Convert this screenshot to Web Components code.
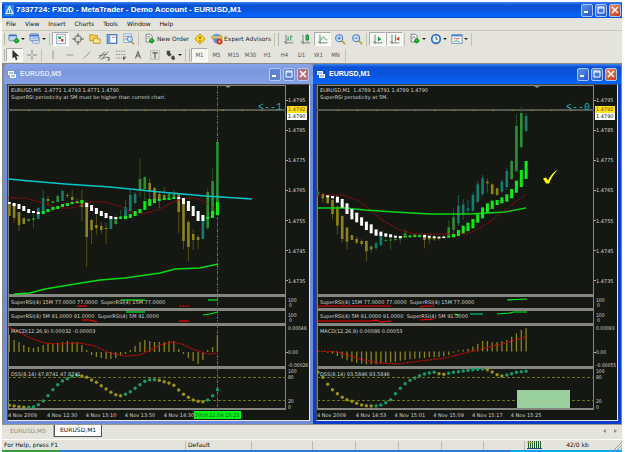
<!DOCTYPE html>
<html lang="en">
<head>
<meta charset="utf-8">
<title>MetaTrader</title>
<style>
html,body{margin:0;height:100%;background:#fff}
body{font:6px/8px "DejaVu Sans",sans-serif;color:#111}
</style>
</head>
<body>
<trader-app></trader-app>
<script>
const reset = `*{box-sizing:border-box}button{font:inherit;color:inherit;background:none;border:0;padding:0;margin:0;display:flex;align-items:center;justify-content:center}svg{display:block}`;

class BaseElement extends HTMLElement {
  constructor() { super(); this.attachShadow({ mode: 'open' }); }
  connectedCallback() { this.shadowRoot.innerHTML = `<style>${reset}${this.css()}</style>${this.html()}`; }
  css() { return ''; }
  html() { return '<slot></slot>'; }
}

/* ---------- icons, 14x14 ---------- */
const plus = (x, y) => `<path d="M${x-3} ${y}h6M${x} ${y-3}v6" stroke="#0b8a1a" stroke-width="3"/><path d="M${x-2} ${y}h4M${x} ${y-2}v4" stroke="#2fcf3a"/>`;
const page = `<path d="M2.500 1.500h5l2 2v7h-7z" fill="#f4f4f4" stroke="#777"/>`;
const lens = `<circle cx="6" cy="6" r="4" fill="#cfe4fb" stroke="#4a7fc4" stroke-width="1.300"/><path d="M9 9l4 4" stroke="#c79a35" stroke-width="2"/>`;
const axes = `<path d="M3.500 2v9.500H12M1 10.500h3M3.500 11v2" stroke="#66777a"/>`;
const ICONS = {
  newchart: `<rect x="1" y="2" width="9" height="7" rx="1" fill="#bcd5f3" stroke="#5b87bb"/><path d="M1 3h9" stroke="#4076ba" stroke-width="1.500"/>${plus(10,9)}`,
  profiles: `<rect x="4" y="4" width="8" height="8" rx="1" fill="#e7eef8" stroke="#7e9cc4"/><rect x="1" y="1" width="10" height="8" rx="1" fill="#c3daf5" stroke="#5b87bb"/><path d="M1 3h10" stroke="#4076ba" stroke-width="2"/><path d="M3 6h6" stroke="#7ba3d1"/>`,
  market: `<rect x="2" y="1.500" width="10" height="11" fill="#fff" stroke="#7a9cc8"/><path d="M4 4h3v3H4z" fill="#20a040"/><path d="M7 7h3v3H7z" fill="#d03a2a"/><path d="M8 4h2M4 9h2" stroke="#89a"/>`,
  cross: `<circle cx="7" cy="7" r="4" stroke="#555"/><path d="M7 0v5M7 9v5M0 7h5M9 7h5" stroke="#555"/>`,
  folder: `<path d="M1 2h4l1 1h4v6H1z" fill="#f7d558" stroke="#b98c1a"/><path d="M5 6h4l1 1h3v5H5z" fill="#fbe88a" stroke="#b98c1a"/>`,
  panel: `<rect x="1.500" y="2" width="11" height="10" fill="#fff" stroke="#3a6fc0" stroke-width="1.400"/><path d="M2 3h3v9H2z" fill="#6ea2e6"/><path d="M7 5h4" stroke="#c77"/>`,
  tester: `<rect x="1" y="1" width="9" height="10" fill="#e5effa" stroke="#8aa8cd"/><path d="M2 4h7M2 7h4" stroke="#88a"/><circle cx="8" cy="7" r="3" fill="#cfe4fb" stroke="#4a7fc4"/><path d="M10 10l3 3" stroke="#b98c1a" stroke-width="1.700"/>`,
  order: `${page}<path d="M4 4h3M4 6h4" stroke="#999"/>${plus(9,9)}`,
  editor: `<path d="M7 1l6 6-6 6-6-6z" fill="#ffd51e" stroke="#c48a08"/><path d="M7 4v3M7 8.500v1.500" stroke="#7a4a00" stroke-width="1.500"/>`,
  expert: `<ellipse cx="7" cy="5" rx="6" ry="3" fill="#f1c84a" stroke="#a98518"/><path d="M3 4c0-4 7-4 8 0z" fill="#5f9ee2"/><path d="M3 6v4c2 3 6 3 7 0V6z" fill="#5b95d8"/><circle cx="10" cy="10" r="3.500" fill="#e0361e"/><path d="M9 9h2v2H9z" fill="#fff"/>`,
  bars: `${axes}<path d="M6 4v5M5 8h1M9 3v6M9 4h2" stroke="#208a50"/>`,
  candles: `${axes}<path d="M8.500 1v9" stroke="#178a30"/><rect x="7" y="3" width="3" height="5" fill="#2bc345" stroke="#178a30"/>`,
  line: `${axes}<path d="M4 9c2-5 4-5 5-3s2 2 3 2" stroke="#2c9a50"/>`,
  zoomin: `${lens}<path d="M4 6h4M6 4v4" stroke="#2368b5"/>`,
  zoomout: `${lens}<path d="M4 6h4" stroke="#2368b5"/>`,
  scroll: `${axes}<path d="M7 4l4 3-4 3z" fill="#1c9e35"/>`,
  shift: `${axes}<path d="M7.500 2v8" stroke="#2f6fba"/><path d="M12 4L8 7l4 2z" fill="#d8431d"/>`,
  indicators: `${page}<path d="M4 7c1-4 2-4 3-1" stroke="#77a"/>${plus(9,9)}`,
  clock: `<circle cx="7" cy="7" r="5" fill="#eaf3ff" stroke="#2e6fc9" stroke-width="2"/><path d="M7 4v3l2 1" stroke="#345"/>`,
  template: `<rect x="1" y="2" width="12" height="10" fill="#fff" stroke="#5b87bb"/><path d="M1 3h12" stroke="#4b88d1" stroke-width="2"/><path d="M3 7l2-1 2 1 3-1" stroke="#c43"/><path d="M3 10l3-1 4 1" stroke="#2a5"/>`,
  cursor: `<path d="M4 1v10l2.500-2 1.500 4 2-1-1.500-3.500H12z" fill="#333"/>`,
  crosshair: `<path d="M7 1v5M7 8v5M1 7h5M8 7h5" stroke="#777"/>`,
  vline: `<path d="M7 2v10" stroke="#888"/>`,
  hline: `<path d="M3 7h8" stroke="#888"/>`,
  trend: `<path d="M3 11l8-8" stroke="#888"/>`,
  channel: `<path d="M1 11l7-8M5 11l7-8M1 8l9-2M3 12l8-3" stroke="#666"/><path d="M11 10h2v3h-2" stroke="#444"/>`,
  fib: `<path d="M1 2.500h11M1 6.500h11M1 10.500h8" stroke="#666" stroke-dasharray="1 1"/><path d="M10 9v4M10 9.500h3M10 11h2" stroke="#444"/>`,
  label: `<path d="M4 11l3-8 3 8M5 8h4" stroke="#666" stroke-width="1.300"/>`,
  textbox: `<rect x="2" y="2" width="10" height="10" stroke="#888" stroke-dasharray="1 1"/><path d="M4 4.500h6M7 4v7" stroke="#555" stroke-width="1.300"/>`,
  arrows: `<path d="M2 2h4v3l2 1-3 3-3-3z" fill="#444"/><path d="M8 8h3v2l1 1-2 2-3-2z" fill="#444"/>`
};
const icon = n => `<svg width="12" height="12" viewBox="0 0 14 14" fill="none" aria-hidden="true">${ICONS[n]}</svg>`;

/* ---------- chrome ---------- */
customElements.define('window-buttons', class extends BaseElement {
  css() { return `:host{display:flex;gap:2px}
    button{width:12px;height:13px;border-radius:2px;border:1px solid #a9c4f5;background:linear-gradient(135deg,#5d92f0,#2458c8)}
    .x{background:linear-gradient(135deg,#ec8a62,#c43a12)}
    :host([dim]) button{background:#5f84cf;border-color:#b7c8f0}:host([dim]) .x{background:#b0707c}`; }
  html() { return `<button aria-label="Minimize"><svg width="8" height="8"><path d="M1 6h4" stroke="#fff" stroke-width="2"/></svg></button>
    <button aria-label="Restore"><svg width="8" height="8"><path d="M1 1h6v6H1zM1 2h6" fill="none" stroke="#fff"/></svg></button>
    <button class="x" aria-label="Close"><svg width="8" height="8"><path d="M1 1l6 6M7 1L1 7" stroke="#fff" stroke-width="1.500"/></svg></button>`; }
});

customElements.define('app-title', class extends BaseElement {
  css() { return `:host{display:flex;align-items:center;height:16px;padding:0 1px 0 3px;gap:2px;background:linear-gradient(#3a86f2,#0a50d4 20%,#0a56e0 55%,#0567ff 90%,#0549c4);color:#fff;font:bold 8px/10px "Liberation Sans",Arial,sans-serif}
    h1{font:inherit;margin:0;flex:1;white-space:nowrap}`; }
  html() { return `<svg width="9" height="11" viewBox="0 0 9 11"><rect width="9" height="11" fill="#2c8ae0"/><path d="M4.500 1.500L8 8.500H1z" fill="none" stroke="#e9f5ff" stroke-width="1.200"/><path d="M1 8.500h7M4.500 4v4" stroke="#fff"/></svg>
    <h1><slot></slot></h1><window-buttons></window-buttons>`; }
});

customElements.define('menu-bar', class extends BaseElement {
  css() { return `:host{display:block;height:13px;border-bottom:1px solid #c9c9b6}nav{display:flex;gap:9px;padding:2px 4px}`; }
  html() { return `<nav>${['File','View','Insert','Charts','Tools','Window','Help'].map(t => `<button>${t}</button>`).join('')}</nav>`; }
});

customElements.define('tool-button', class extends BaseElement {
  css() { return `:host{display:block}button{height:14px;min-width:17px;gap:1px;white-space:nowrap;color:#222}
    :host([menu]) button{width:21px}
    :host([pressed]) button{background:#f7f7f2;border:1px solid;border-color:#aaa #fff #fff #aaa}
    :host([period]) button{color:#555;width:17px;font-family:"DejaVu Sans Condensed","DejaVu Sans",sans-serif}
    .car{border:solid transparent;border-width:2px 2px 0;border-top-color:#222}
    :host([text]) button{padding:0 2px 0 3px}`; }
  html() { const n = this.getAttribute('icon');
    return `<button aria-label="${this.textContent || n}">${n ? icon(n) : ''}<slot></slot>${this.hasAttribute('menu') ? '<i class="car"></i>' : ''}</button>`; }
});

customElements.define('tool-bar', class extends BaseElement {
  css() { return `:host{display:flex;align-items:center;height:16px;padding-left:4px;background:linear-gradient(#b5b5a5,#b5b5a5) 2px 2px/1px 12px no-repeat}`; }
});
customElements.define('tool-sep', class extends BaseElement {
  css() { return `:host{width:4px;height:13px;background:linear-gradient(#c2c2ae,#c2c2ae) 1px 0/1px 100% no-repeat}
    :host([grip]){width:7px;background:linear-gradient(#c2c2ae,#c2c2ae) 1px 0/1px 100% no-repeat,linear-gradient(#b5b5a5,#b5b5a5) 5px 0/1px 100% no-repeat}`; }
});

/* ---------- chart data: [body top, body bottom, wick top, wick bottom, colour] ---------- */
const STEP = 4.84;
const M5 = {
  x0: 9.3, left: 8, width: 278, crosshair: 217.5, marker: 228,
  candles: [[203,216],[204,218,203,223],[212,225,212,231],[218,224],[219,221,218,222,'g'],[218,220,213,228,'g'],[208,219,207,219,'t'],[198,211,190,213,'t'],[199,201,196,206],[201,203,201,203,'g'],[196,202,194,202,'g'],[191,201,190,201,'t'],[195,196,193,198],[197,200,190,203],[201,203,198,204],[200,207,190,221],[202,237,202,267],[220,230,219,244],[225,228,214,235],[226,230,222,234],[228,229,223,244],[219,229,217,229,'t'],[217,224,215,225,'g'],[216,219,210,219,'g'],[207,218,200,218,'t'],[195,211,190,213,'t'],[194,203,192,204,'t'],[179,190,158,197,'g'],[177,189,176,200,'g'],[183,192,178,199],[188,199,187,201],[194,201,191,208],[195,198,187,199],[194,198,193,198,'g'],[194,197,190,198,'g'],[193,212,193,233],[201,241,200,249],[222,247,220,261],[234,240,229,250],[237,240,235,249],[219,239,218,239,'t'],[192,228,188,230,'g'],[181,217,168,217,'g'],[142,204,142,204,'g']],
  blocks: [[202,204],[203,206],[204,209],[206,211],[209,213],[211,213],[212,214],[211,214,1],[209,212,1],[207,210,1],[206,209,1],[204,207,1],[203,206,1],[202,204,1],[202,203,1],[200,203,1],[203,207],[205,211],[208,214],[211,216],[213,218],[216,219],[217,219],[217,219,1],[216,219,1],[214,218,1],[211,216,1],[209,213,1],[201,210,1],[199,206,1],[199,203,1],[199,201,1],[198,200,1],[198,200,1],[197,199,1],[197,199],[198,204],[201,211],[206,216],[211,221],[215,221],[217,219,1],[211,218,1],[202,215,1]],
  overlays: [['#00c8c8','8,179 30,181 65,184 110,187 160,192 205,196 252,199',1.5],['#a80808','8,198 25,198 40,202 58,208 72,208 90,202 105,202 120,206 133,213 148,213 160,209 175,201 187,198 195,198 205,202 213,208 217,211',1,'2 1'],['#08dc14','14,294 30,293 45,289 75,284 100,280 125,278 160,273 175,269 200,268 218,264',1.3]],
  rsi15: [['#f00','77,306 87,306'],['#0e2','121,300 145,300'],['#f00','179,306 189,306','2 1'],['#0e2','208,300 218,300']],
  rsi5: [['#0e2','126,312 145,312'],['#f00','82,320 90,320 97,322'],['#f00','179,321 189,321'],['#0e2','203,315 210,314 218,312']],
  zero: 352, macd: [335,340,342,345,347,348,347,345,343,344,343,342,341,342,342,345,350,355,357,358,359,359,358,356,354,350,346,342,340,341,342,342,342,341,341,349,354,358,361,364,360,350,347,335],
  signal: '8,327 18,331 30,338 45,343 60,344 80,343 95,346 110,353 125,356 140,355 150,350 160,345 172,342 182,344 195,350 208,354 217,353',
  dss: [346,348,350,352,352,350,344,333,317,299,284,273,266,258,256,258,262,270,277,287,297,307,314,317,313,305,295,284,274,269,269,271,275,279,286,300,313,322,330,334,335,330,317,299],
  head: ['EURUSD,M5&nbsp; 1.4771 1.4793 1.4771 1.4790','SuperRSI periodicity at 5M must be higher than current chart.'],
  macdText: 'MACD(12,26,9) 0.00032 -0.00003', dssText: 'DSS(8,14) 47.8741 47.8741', macdAxis: ['0.00048','0.00','-0.00026'],
  arrow: '&lt;--1', times: ['4 Nov 2009','4 Nov 12:30','4 Nov 13:10','4 Nov 13:50','4 Nov 14:30'], cursorTime: '2009.11.04 15:25'
};
const c = (a, b, wa, wb, k) => [180 + a/3, 180 + b/3, 180 + (wa ?? a)/3, 180 + (wb ?? b)/3, k];
const blk = (a, b, g) => [180 + a/3, 180 + b/3, g];
const M1 = {
  x0: 318, left: 317, width: 277, marker: 537,
  candles: [c(35,45,30,50,'t'),c(42,55,38,68),c(50,70),c(60,102,58,118),c(80,137,75,163),c(108,177,105,187),c(143,185,140,208),c(165,180),c(177,188,170,192),c(183,192,178,198),c(183,214,180,243),c(200,208,195,218),c(190,204,185,210,'t'),c(168,195,166,198,'t'),c(180,183,172,185,'g'),c(178,182,170,210,'g'),c(176,180,172,184,'g'),c(172,178,168,190,'g'),c(160,172,147,174,'g'),c(167,170,163,174,'g'),c(163,170,162,173,'g'),c(165,170,160,172,'g'),c(165,180,163,205),c(170,178,168,192),c(170,178,166,183),c(172,176,168,182),c(168,172,165,176,'g'),c(142,170,122,172,'g'),c(112,150,85,165,'g'),c(77,130,45,138,'t'),c(73,105,58,120,'t'),c(85,92,60,103,'t'),c(45,92,38,95,'t'),c(13,65,3,68,'t'),c(-5,42,-15,48,'t'),c(5,10,-5,38),c(13,42,10,44),c(25,45,22,48),c(5,35,0,38,'t'),[171,187,168,190,'t'],[161,179,160,180,'g'],[126,171,114,173,'g'],[113,147,107,149,'g'],[116,131,113,132,'t']],
  blocks: [,,blk(46,52),blk(48,55),blk(50,68),blk(57,83),blk(70,102),blk(87,118),blk(98,127),blk(112,137),blk(125,150),blk(133,160),blk(148,167),blk(155,168),blk(160,170),blk(163,172),blk(167,173),blk(168,174),blk(168,172,1),blk(167,172,1),blk(166,171,1),blk(166,171,1),blk(165,172),blk(167,173),blk(169,174),blk(170,175),blk(170,174),blk(168,173,1),blk(162,172,1),blk(150,168,1),blk(137,160,1),blk(128,153,1),blk(117,145,1),blk(103,128,1),blk(82,115,1),blk(70,98,1),blk(62,87,1),blk(60,75,1),blk(52,70,1),blk(43,65,1),blk(27,55,1),blk(2,38,1),[170,187,1],[161,179,1]],
  overlays: [['#a80808','318,195 343,195 357,200 368,208 382,220 400,230 415,234 440,234 465,234 475,231 490,222 505,210 520,199 526,194',1,'2 1'],['#08d814','317,208 345,208 365,210 395,212 430,214 470,214 505,212 526,208',1.3]],
  rsi15: [['#f00','318,306 391,306'],['#f00','420,307 426,306 434,306'],['#0e2','507,300 527,299']],
  rsi5: [['#f00','318,321 372,321 376,320 380,322 391,321'],['#f00','420,320 434,319'],['#0e2','454,314 459,315'],['#0b8','470,314 483,314'],['#0e2','497,314 510,313 514,312 527,312']],
  zero: 351.5, macd: [184,186,188,191,198,205,211,215,218,221,223,223,222,220,218,217,215,212,210,208,206,205,204,202,202,201,199,195,188,181,179,176,170,161,153,153,157,156,153,150,140,130,120,115].map(v => 290 + v/3),
  signal: '318,351 338,352 360,359 378,363 398,364 420,361 445,358 465,353 485,348 505,343 526,337',
  dss: [247,262,283,299,311,322,329,334,340,345,347,348,348,345,338,329,311,295,281,271,264,257,252,249,247,251,253,250,247,245,243,241,239,238,237,239,246,254,258,255,251,247,245,244],
  head: ['EURUSD,M1&nbsp; 1.4789 1.4791 1.4789 1.4790','SuperRSI periodicity at 5M.'],
  macdText: 'MACD(12,26,9) 0.00086 0.00053', dssText: 'DSS(8,14) 93.5846 93.5846', macdAxis: ['0.00093','0.00','-0.00055'],
  arrow: '&lt;--0', times: ['4 Nov 2009','4 Nov 14:53','4 Nov 15:01','4 Nov 15:09','4 Nov 15:17','4 Nov 15:25'], check: true
};
const CHARTS = { M5, M1 };
const COL = { t: '#0f7f72', g: '#2c8f35', o: '#8c8414' };
const WICK = { t: '#155c50', g: '#2a4f1e', o: '#55500f' };
const line = (col, pts, w = 1.4, dash = '') => `<polyline points="${pts}" fill="none" stroke="${col}" stroke-width="${w}" stroke-dasharray="${dash}"/>`;
const xs = (d, i) => +(d.x0 + STEP * i).toFixed(1);

const draw = {
  main(d) {
    const r = d.left + d.width;
    let s = `<path d="M${d.left} 110H${r}" stroke="#555850" stroke-width="2"/><path d="M${d.left+20} 110.500H${r-20}" stroke="#8c8414" stroke-dasharray="2 17.400"/>
      <path d="M${d.marker-3} 86h6l-3 2z" fill="#888"/>`;
    d.candles.forEach(([a, b, wa = a, wb = b, k = 'o'], i) => { const x = xs(d, i);
      s += `<path d="M${x} ${wa}V${wb}" stroke="${WICK[k]}"/><path d="M${x} ${a}V${b}" stroke="${COL[k]}" stroke-width="2.600"/>`; });
    d.overlays.forEach(o => s += line(...o));
    d.blocks.forEach(([a, b, g], i) => s += `<path d="M${xs(d, i)} ${a}V${b}" stroke="${g ? '#06ee12' : '#fff'}" stroke-width="3"/>`);
    if (d.check) s += `<path d="M543 178.500l3-1 2 3q3-7 10-11q-6 6-9 14h-3z" fill="#ff0"/>`;
    return s;
  },
  rsi15: d => d.rsi15.map(([k, p, h]) => line(k, p, 1.2, h)).join(''),
  rsi5: d => d.rsi5.map(([k, p]) => line(k, p, 1.2)).join(''),
  macd: d => d.macd.map((v, i) => `<path d="M${xs(d, i)} ${d.zero}V${v}" stroke="#8a8413" stroke-width="1.300"/>`).join('') + line('#d00808', d.signal, 1.2, '2 1'),
  dss(d) {
    const r = d.left + d.width;
    let s = `<path d="M${d.left} 377.500H${r}M${d.left} 400.500H${r}" stroke="#6f7416" stroke-dasharray="3 2"/>`;
    d.dss.forEach((v, i) => s += `<circle cx="${xs(d, i)}" cy="${(290 + v/3).toFixed(1)}" r="1.700" fill="${v <= (d.dss[i-1] ?? 0) ? '#1b9a68' : '#9a9218'}"/>`);
    if (d.check) s += `<rect x="517" y="390" width="53" height="18" fill="#9bd0a0"/><path d="M517 400.500h53" stroke="#a5c882" stroke-dasharray="3 2"/>`;
    return s;
  }
};

customElements.define('chart-plot', class extends BaseElement {
  css() { return `:host{display:block;position:relative;overflow:hidden;min-height:0;padding:3px 0 0 3px;white-space:nowrap;box-shadow:inset 1px 1px #85857f,inset -1px -2px #85857f}
    :host([pane=main]){padding-top:2px}
    svg{position:absolute;inset:0;width:100%;height:100%}div{position:relative}`; }
  html() {
    const d = CHARTS[this.getAttribute('chart')], n = this.getAttribute('pane');
    const [y, h] = { main:[85,211], rsi15:[296,14], rsi5:[310,15], macd:[325,43], dss:[368,42] }[n];
    const cross = d.crosshair ? `<path d="M${d.crosshair} ${y}v${h}" stroke="#1f9a4a" stroke-dasharray="3 1 1 1"/>` : '';
    return `<svg viewBox="${d.left} ${y} ${d.width} ${h}" preserveAspectRatio="none" aria-hidden="true">${cross}${draw[n](d)}</svg><div><slot></slot></div>`;
  }
});

customElements.define('chart-window', class extends BaseElement {
  css() { return `:host{display:flex;flex-direction:column;min-width:0;min-height:0;padding:0 3px 3px;background:#0b3ccc;border-radius:4px 4px 0 0}
    :host([dim]){background:#6f8bdc}
    header{display:flex;align-items:center;height:20px;flex:none;margin:0 -3px;padding:0 4px 0 4px;gap:3px;border-radius:4px 4px 0 0;background:linear-gradient(#3a86f2,#0a50d4 15%,#0a56e0 60%,#0567ff);color:#fff;font:bold 7px/10px "Liberation Sans",Arial,sans-serif}
    :host([dim]) header{background:linear-gradient(#8aa4e8,#7c96de 40%,#86a2e6);color:#dfe6f8}
    h2{font:inherit;margin:0;flex:1}
    .client{flex:1;min-height:0;background:#151812;border:1px solid;border-color:#444 #e8e8e8 #e8e8e8 #444;display:grid;grid-template-columns:minmax(0,1fr) 23px;grid-template-rows:211fr 14fr 15fr 43fr 42fr 10fr;color:#d4d4d0;font-size:5px;line-height:6px}
    .ax{display:flex;flex-direction:column;min-height:0;padding-left:2px;justify-content:space-between;position:relative;white-space:nowrap;font-family:"DejaVu Sans Condensed","DejaVu Sans",sans-serif}
    .price{padding:0;font-family:"DejaVu Sans",sans-serif}.price span{flex:1;display:flex;align-items:center}.price span::before,.zero::before{content:"";width:2px;height:1px;background:#aaa}
    .zero{display:flex;align-items:center;margin:11px 0 0 -2px}
    .two{justify-content:center;line-height:5px}.two span+span{padding-left:1px}
    .dss{display:grid;grid-template-rows:6px 1fr 6px 6px}
    .tag{position:absolute;left:1px;right:2px;top:21px;background:#fff;color:#111;padding-left:1px;line-height:7px}
    .tag b{display:block;font-weight:normal;background:#f3e21c;color:#a33c00;margin-left:-1px;padding-left:1px;line-height:7px}
    .arrow{position:absolute;right:4px;top:17px;color:#1fb5ab;font:10px/12px "Liberation Mono",monospace}
    .mainp{position:relative;display:grid;min-height:0;line-height:7px}
    .times{grid-column:1/-1;display:flex;position:relative;line-height:10px;white-space:nowrap;padding-right:23px}
    .times span{flex:0 0 14%}
    .cur{position:absolute;left:186px;top:1px;background:#06f01a;color:#0b5a12;line-height:8px;padding:0 1px}`; }
  html() {
    const k = this.getAttribute('chart'), d = CHARTS[k];
    return `<header><svg width="9" height="9" viewBox="0 0 9 9"><path d="M0 1h6v4H0zM2 4h6v4H2z" fill="#fff"/><path d="M1 3h4M3 6h4" stroke="#4a84dc"/></svg><h2>EURUSD,${k}</h2><window-buttons ${this.hasAttribute('dim') ? 'dim' : ''}></window-buttons></header>
    <div class="client">
      <div class="mainp"><chart-plot chart="${k}" pane="main">${d.head.join('<br>')}</chart-plot><span class="arrow">${d.arrow}</span></div>
      <div class="ax price">${['1.4795','1.4785','1.4775','1.4765','1.4755','1.4745','1.4735'].map(p => `<span>${p}</span>`).join('')}<div class="tag"><b>1.4792</b>1.4790</div></div>
      <chart-plot chart="${k}" pane="rsi15">SuperRSI(4) 15M 77.0000 77.0000&nbsp; SuperRSI(4) 15M 77.0000</chart-plot><div class="ax two"><span>100</span><span>0</span></div>
      <chart-plot chart="${k}" pane="rsi5">SuperRSI(4) 5M 91.0000 91.0000&nbsp; SuperRSI(4) 5M 91.0000</chart-plot><div class="ax two"><span>100</span><span>0</span></div>
      <chart-plot chart="${k}" pane="macd">${d.macdText}</chart-plot><div class="ax"><span>${d.macdAxis[0]}</span><span class="zero">${d.macdAxis[1]}</span><span>${d.macdAxis[2]}</span></div>
      <chart-plot chart="${k}" pane="dss">${d.dssText}</chart-plot><div class="ax dss"><span>100</span><span>80</span><span>20</span><span>0</span></div>
      <div class="times">${d.times.map(t => `<span>${t}</span>`).join('')}${d.cursorTime ? `<div class="cur">${d.cursorTime}</div>` : ''}</div>
    </div>`;
  }
});

customElements.define('chart-tabs', class extends BaseElement {
  css() { return `:host{display:flex;height:16px;padding:0 5px 0 1px;border-top:1px solid #98988c;border-bottom:1px solid #fafaf6;align-items:flex-start}
    button{height:12px;padding:0 7px 1px;color:#9a8e78;border-right:1px solid #aaa}
    button[aria-selected=true]{background:#fff;color:#111;border:1px solid #555;border-top:0;padding:0 5px 1px}
    div{display:flex;flex:1}.nav{flex:none;gap:8px;padding-top:4px}
    i{border:solid transparent;border-width:2px 3px 2px 0;border-right-color:#9b8d78}i+i{border-width:2px 0 2px 3px;border-left-color:#9b8d78}`; }
  html() { return `<div role="tablist"><button role="tab">EURUSD,M5</button><button role="tab" aria-selected="true">EURUSD,M1</button></div><div class="nav"><i></i><i></i></div>`; }
});

customElements.define('status-bar', class extends BaseElement {
  css() { return `:host{display:grid;grid-template-columns:184fr 66fr 61fr 43fr 43fr 43fr 42fr 41fr 97fr;height:10px;align-items:center}
    span{height:9px;line-height:8px;padding-left:2px;border-right:1px solid #bdbda9;white-space:nowrap}span:first-child{padding-left:1px}
    span:last-child{border:0;display:flex;justify-content:space-between;align-items:center}`; }
  html() { return `<span>For Help, press F1</span><span>Default</span>${'<span></span>'.repeat(6)}<span><svg width="15" height="8"><path d="M1.500 0v8M3.500 0v8M5.500 0v8M7.500 0v8M9.500 0v8M11.500 0v8M13.500 0v8" stroke="#1d5a2c"/><path d="M0 7.500h15" stroke="#1b4a7c"/><path d="M0 1.500h6" stroke="#b8a91c"/></svg>42/0 kb<svg width="9" height="9"><path d="M1 9l8-8M4 9l5-5M7 9l2-2" stroke="#999"/></svg></span>`; }
});

customElements.define('trader-app', class extends BaseElement {
  css() { return `:host{display:flex;flex-direction:column;min-height:100vh;padding:2px 3px 0 2px;box-sizing:border-box;background:#fff}
    .body{background:#e4e4dc;display:flex;flex-direction:column;flex:1}
    main{flex:1;min-height:361px;display:grid;grid-template-columns:309fr 308fr;grid-template-rows:minmax(0,1fr);padding:1px 1px 0 2px;background:#8c8a80}
    .task{height:2px;background:linear-gradient(90deg,#3c9a3c 57px,#2a78e0 57px 82%,#16a4ee 82%)}`; }
  html() {
    const b = (i, a = '', t = '') => `<tool-button icon="${i}" ${a}>${t}</tool-button>`, s = '<tool-sep></tool-sep>', g = '<tool-sep grip></tool-sep>';
    return `<app-title>7337724: FXDD - MetaTrader - Demo Account - EURUSD,M1</app-title>
    <div class="body"><menu-bar></menu-bar>
    <tool-bar>${b('newchart','menu')}${b('profiles','menu')}${s}${b('market','pressed')}${b('cross')}${b('folder')}${b('panel')}${b('tester')}${s}${b('order','text','New Order')}${b('editor')}${b('expert','text','Expert Advisors')}${g}${b('bars')}${b('candles')}${b('line','pressed')}${b('zoomin')}${b('zoomout')}${s}${b('scroll','pressed')}${b('shift','pressed')}${s}${b('indicators','menu')}${b('clock','menu')}${b('template','menu')}${s}</tool-bar>
    <tool-bar>${b('cursor','pressed')}${b('crosshair')}${s}${['vline','hline','trend','channel','fib','label','textbox'].map(n => b(n)).join('')}${b('arrows','menu')}${g}${['M1','M5','M15','M30','H1','H4','D1','W1','MN'].map((p, i) => `<tool-button period ${i ? '' : 'pressed'}>${p}</tool-button>`).join('')}${s}</tool-bar>
    <main><chart-window chart="M5" dim></chart-window><chart-window chart="M1"></chart-window></main>
    <chart-tabs></chart-tabs><status-bar></status-bar></div><div class="task"></div>`;
  }
});
</script>
</body>
</html>
